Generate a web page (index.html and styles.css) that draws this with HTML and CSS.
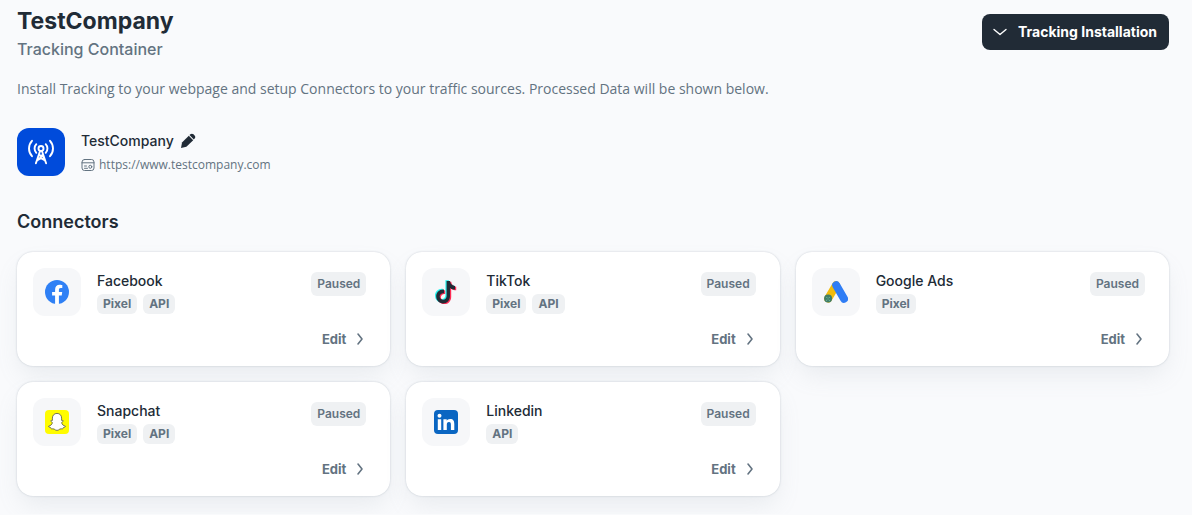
FILE: index.html
```html
<!DOCTYPE html>
<html lang="en">
<head>
    <meta charset="UTF-8">
    <meta name="viewport" content="width=device-width, initial-scale=1">
    <title>TestCompany - Tracking Container</title>
    <link rel="stylesheet" href="styles.css">
</head>
<body>
<main class="page">
    <header class="page-header">
        <div>
            <h1>TestCompany</h1>
            <p class="subtitle">Tracking Container</p>
        </div>
        <button type="button" class="install-button">
            <svg width="16" height="16" viewBox="0 0 16 16" fill="none" stroke="currentColor" stroke-width="1.4" stroke-linecap="round" stroke-linejoin="round"><path d="M2 5.5l6 5 6-5"/></svg>
            Tracking Installation
        </button>
    </header>

    <p class="intro">Install Tracking to your webpage and setup Connectors to your traffic sources. Processed Data will be shown below.</p>

    <section class="company">
        <div class="company-logo">
            <svg width="28" height="28" viewBox="0 0 28 28" fill="none" stroke="#fff" stroke-width="1.9" stroke-linecap="round" stroke-linejoin="round">
                <circle cx="14" cy="10.5" r="2.5"/>
                <path d="M9.3 14.8a6.2 6.2 0 0 1 0-8.6M18.7 14.8a6.2 6.2 0 0 0 0-8.6M5 18.2a11.4 11.4 0 0 1 0-15.4M23 18.2a11.4 11.4 0 0 0 0-15.4"/>
                <path d="M13 13.2L8.9 25.3M15 13.2l4.1 12.1M12 17.5h4l-5.6 4.7M16 17.5l1.6 4.7M10.4 22.2L14 20.2l3.6 2"/>
            </svg>
        </div>
        <div>
            <div class="company-name">
                <span>TestCompany</span>
                <button type="button" class="icon-button" aria-label="Edit company">
                    <svg width="16" height="16" viewBox="0 0 16 16" fill="currentColor"><path d="M2 9.6L8.8 2.8l4.4 4.4-6.8 6.6L1 15z"/><path d="M9.5 2.1l.8-.8c1-.9 2.2-.9 3.2 0l1.1 1.1c.9 1 .9 2.2 0 3.2l-.8.9z"/></svg>
                </button>
            </div>
            <a class="company-link" href="https://www.testcompany.com">
                <svg width="14" height="14" viewBox="0 0 14 14" fill="none" stroke="currentColor" stroke-linecap="round"><rect x="1" y="1.5" width="12" height="11" rx="2.5"/><path d="M1 4.8h12M3.5 8h2M3.5 10.3h3"/><circle cx="9.3" cy="8.8" r="1.5"/></svg>
                https://www.testcompany.com
            </a>
        </div>
    </section>

    <h2>Connectors</h2>

    <section class="connectors">
        <article class="card">
            <div class="card-top">
                <div class="card-icon">
                    <svg width="24" height="24" viewBox="0 0 24 24"><circle cx="12" cy="12" r="12" fill="#2f80f5"/><path d="M10.1 24v-8.5H7.1V12h3V9.4c0-3 1.8-4.7 4.5-4.7 1.3 0 2.7.3 2.7.3v2.9h-1.5c-1.5 0-1.9.9-1.9 1.9V12h3.3l-.5 3.5h-2.8V24z" fill="#fff"/></svg>
                </div>
                <div class="card-info">
                    <h3>Facebook</h3>
                    <div class="tags"><span class="tag">Pixel</span><span class="tag">API</span></div>
                </div>
                <span class="status">Paused</span>
            </div>
            <button type="button" class="edit-button">Edit <svg width="16" height="16" viewBox="0 0 16 16"><path d="M6 3l4 5-4 5"/></svg></button>
        </article>

        <article class="card">
            <div class="card-top">
                <div class="card-icon">
                    <svg width="24" height="24" viewBox="0 0 24 24">
                        <path transform="translate(-1.2 -.8)" fill="#25f4ee" d="M12.6 1h3.4c.3 2.8 2.2 4.6 5 4.9v3.6c-1.8 0-3.6-.5-5-1.5v7.9c0 4.5-3.2 7.5-6.9 7.5-4 0-6.9-3.2-6.9-6.9 0-4.3 3.5-7.4 7.8-6.9v3.7c-2.3-.4-4.3 1.1-4.3 3.2 0 1.9 1.5 3.3 3.3 3.3 2 0 3.6-1.4 3.6-3.7z"/>
                        <path transform="translate(1.2 .8)" fill="#fe2c55" d="M12.6 1h3.4c.3 2.8 2.2 4.6 5 4.9v3.6c-1.8 0-3.6-.5-5-1.5v7.9c0 4.5-3.2 7.5-6.9 7.5-4 0-6.9-3.2-6.9-6.9 0-4.3 3.5-7.4 7.8-6.9v3.7c-2.3-.4-4.3 1.1-4.3 3.2 0 1.9 1.5 3.3 3.3 3.3 2 0 3.6-1.4 3.6-3.7z"/>
                        <path fill="#212b36" d="M12.6 1h3.4c.3 2.8 2.2 4.6 5 4.9v3.6c-1.8 0-3.6-.5-5-1.5v7.9c0 4.5-3.2 7.5-6.9 7.5-4 0-6.9-3.2-6.9-6.9 0-4.3 3.5-7.4 7.8-6.9v3.7c-2.3-.4-4.3 1.1-4.3 3.2 0 1.9 1.5 3.3 3.3 3.3 2 0 3.6-1.4 3.6-3.7z"/>
                    </svg>
                </div>
                <div class="card-info">
                    <h3>TikTok</h3>
                    <div class="tags"><span class="tag">Pixel</span><span class="tag">API</span></div>
                </div>
                <span class="status">Paused</span>
            </div>
            <button type="button" class="edit-button">Edit <svg width="16" height="16" viewBox="0 0 16 16"><path d="M6 3l4 5-4 5"/></svg></button>
        </article>

        <article class="card">
            <div class="card-top">
                <div class="card-icon">
                    <svg width="24" height="24" viewBox="0 0 24 24" fill="none" stroke-width="8" stroke-linecap="round"><path d="M12 5.2L4.2 18.6" stroke="#f2bc0c"/><path d="M12.2 5.2L20 18.8" stroke="#2f7df5"/><circle cx="4.1" cy="18.6" r="4" fill="#3f7d68"/><path d="M2.8 17.4h.1M5.2 17.4h.1M4 19h.1M2.6 20.3h.1M5.3 20.4h.1" stroke="#7fc7a4" stroke-width="1"/></svg>
                </div>
                <div class="card-info">
                    <h3>Google Ads</h3>
                    <div class="tags"><span class="tag">Pixel</span></div>
                </div>
                <span class="status">Paused</span>
            </div>
            <button type="button" class="edit-button">Edit <svg width="16" height="16" viewBox="0 0 16 16"><path d="M6 3l4 5-4 5"/></svg></button>
        </article>

        <article class="card">
            <div class="card-top">
                <div class="card-icon">
                    <svg width="24" height="24" viewBox="0 0 24 24"><rect width="24" height="24" rx="4" fill="#fffc00"/><path d="M12 3.4c2.8 0 4.6 2 4.6 4.7v2.3c.5.2 1.4-.3 1.7.4.3.8-1.6 1.1-1.7 1.9.3 1.8 1.9 3 3.8 3.5.1 1.2-1.6 1.1-2.3 1.6-.3.5-.1 1-.7 1.1-.7.1-1.7-.3-2.6.2-.9.6-1.6 1.3-2.8 1.3s-1.9-.7-2.8-1.3c-.9-.5-1.9-.1-2.6-.2-.6-.1-.4-.6-.7-1.1-.7-.5-2.4-.4-2.3-1.6 1.9-.5 3.5-1.7 3.8-3.5-.1-.8-2-1.1-1.7-1.9.3-.7 1.2-.2 1.7-.4V8.1c0-2.7 1.8-4.7 4.6-4.7z" fill="#fff" stroke="#50534a" stroke-width=".8"/></svg>
                </div>
                <div class="card-info">
                    <h3>Snapchat</h3>
                    <div class="tags"><span class="tag">Pixel</span><span class="tag">API</span></div>
                </div>
                <span class="status">Paused</span>
            </div>
            <button type="button" class="edit-button">Edit <svg width="16" height="16" viewBox="0 0 16 16"><path d="M6 3l4 5-4 5"/></svg></button>
        </article>

        <article class="card">
            <div class="card-top">
                <div class="card-icon">
                    <svg width="24" height="24" viewBox="0 0 24 24"><rect width="24" height="24" rx="4" fill="#0a66c2"/><circle cx="5.5" cy="5.7" r="2" fill="#fff"/><path d="M3.8 9.3h3.4V20H3.8zM9.4 9.3h3.3v1.5c.6-1 1.7-1.8 3.4-1.8 3.3 0 4.2 2 4.2 5.1V20h-3.4v-5.4c0-1.4-.2-2.7-1.9-2.7-1.7 0-2.2 1.2-2.2 2.7V20H9.4z" fill="#fff"/></svg>
                </div>
                <div class="card-info">
                    <h3>Linkedin</h3>
                    <div class="tags"><span class="tag">API</span></div>
                </div>
                <span class="status">Paused</span>
            </div>
            <button type="button" class="edit-button">Edit <svg width="16" height="16" viewBox="0 0 16 16"><path d="M6 3l4 5-4 5"/></svg></button>
        </article>
    </section>
</main>
</body>
</html>
```
FILE: styles.css
```css
body {
    margin: 0;
    background-color: #f9fafc;
    color: #212b36;
    font-family: Inter, sans-serif;
    font-size: 14px;
    line-height: 22px;
}

h1, h2, h3, p {
    margin: 0;
}

button {
    border: none;
    font-family: inherit;
    cursor: pointer;
}

svg {
    display: block;
    flex-shrink: 0;
}

.page {
    padding: 4px 23px 18px 17px;
}

.page-header {
    display: flex;
    justify-content: space-between;
    align-items: flex-start;
}

h1 {
    font-size: 23px;
    font-weight: 700;
    line-height: 34px;
}

.subtitle {
    color: #637381;
    font-size: 16px;
    font-weight: 500;
    line-height: 22px;
}

.install-button {
    display: flex;
    align-items: center;
    gap: 10px;
    margin-top: 10px;
    padding: 6px 12px 6px 10px;
    border-radius: 8px;
    background-color: #212b36;
    color: white;
    font-size: 14px;
    font-weight: 700;
    line-height: 24px;
}

.intro {
    margin-top: 18px;
    color: #637381;
    font-family: "Open Sans", sans-serif;
}

.company {
    display: flex;
    align-items: center;
    gap: 16px;
    margin-top: 28px;
}

.company-logo {
    display: flex;
    align-items: center;
    justify-content: center;
    width: 48px;
    height: 48px;
    border-radius: 12px;
    background-color: #004bdb;
}

.company-name {
    display: flex;
    align-items: center;
    gap: 6px;
    font-weight: 500;
}

.icon-button {
    padding: 0;
    background: none;
    color: inherit;
}

.company-link {
    display: flex;
    align-items: center;
    gap: 4px;
    margin-top: 4px;
    color: #637381;
    font-family: "Open Sans", sans-serif;
    font-size: 12px;
    line-height: 18px;
    text-decoration: none;
}

h2 {
    margin-top: 32px;
    font-size: 18px;
    font-weight: 600;
    line-height: 28px;
}

.connectors {
    display: grid;
    grid-template-columns: repeat(3, 1fr);
    gap: 16px;
    margin-top: 16px;
}

.card {
    display: flex;
    flex-direction: column;
    gap: 8px;
    padding: 16px 22px 12px 16px;
    border-radius: 16px;
    background-color: white;
    box-shadow: 0 0 2px rgba(145, 158, 171, 0.5), 0 12px 24px -4px rgba(145, 158, 171, 0.16);
}

.card-top {
    display: flex;
    gap: 16px;
    padding-right: 2px;
}

.card-icon {
    display: flex;
    align-items: center;
    justify-content: center;
    width: 48px;
    height: 48px;
    border-radius: 12px;
    background-color: #f6f7f9;
}

.card-info {
    flex: 1;
    padding-top: 2px;
}

h3 {
    font-size: 14px;
    font-weight: 500;
    line-height: 22px;
}

.tags {
    display: flex;
    gap: 6px;
    margin-top: 2px;
}

.tag, .status {
    padding: 0 6px;
    border-radius: 6px;
    background-color: #eff1f3;
    color: #637381;
    font-size: 12px;
    font-weight: 700;
    line-height: 20px;
}

.status {
    align-self: flex-start;
    margin-top: 4px;
    font-weight: 600;
    line-height: 24px;
}

.edit-button {
    display: flex;
    align-items: center;
    align-self: flex-end;
    gap: 6px;
    padding: 4px 0;
    background: none;
    color: #637381;
    font-size: 13px;
    font-weight: 700;
    line-height: 22px;
}

.edit-button svg {
    fill: none;
    stroke: currentColor;
    stroke-width: 1.6;
    stroke-linecap: round;
    stroke-linejoin: round;
}

@media (max-width: 800px) {
    .connectors {
        grid-template-columns: 1fr;
    }
}
```
